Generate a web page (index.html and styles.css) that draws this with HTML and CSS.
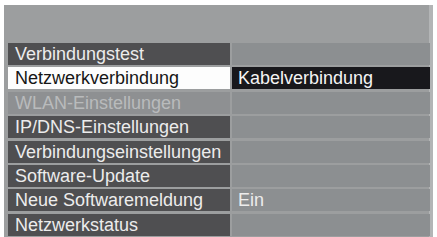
FILE: index.html
```html
<!DOCTYPE html>
<html lang="de">
<head>
    <meta charset="UTF-8">
    <title>Netzwerk-Einstellungen</title>
    <link rel="stylesheet" href="styles.css">
</head>
<body>
    <div class="panel">
        <div class="menu">
            <div class="item">Verbindungstest</div>
            <div class="value"></div>

            <div class="item selected">Netzwerkverbindung</div>
            <div class="value selected">Kabelverbindung</div>

            <div class="item disabled">WLAN-Einstellungen</div>
            <div class="value"></div>

            <div class="item">IP/DNS-Einstellungen</div>
            <div class="value"></div>

            <div class="item">Verbindungseinstellungen</div>
            <div class="value"></div>

            <div class="item">Software-Update</div>
            <div class="value"></div>

            <div class="item">Neue Softwaremeldung</div>
            <div class="value">Ein</div>

            <div class="item">Netzwerkstatus</div>
            <div class="value"></div>
        </div>
    </div>
</body>
</html>
```

FILE: styles.css
```css
body {
    margin: 0;
    padding: 0;
    background: white;
    font-family: "Liberation Sans", Arial, sans-serif;
    overflow: hidden;
}

.panel {
    margin: 5px 4px 0 4px;
    width: 429px;
    height: 232px;
    box-sizing: border-box;
    padding: 38px 3px 0 4px;
    background: #9c9e9f;
    border-right: 4px solid #b3b5b6;
}

.menu {
    display: grid;
    grid-template-columns: 222px 198px;
    grid-auto-rows: 22px;
    column-gap: 2px;
    row-gap: 2.4px;
}

.item,
.value {
    font-size: 18px;
    line-height: 22px;
    white-space: nowrap;
    overflow: hidden;
    color: #ececec;
}

.item {
    padding-left: 7px;
    background: #4f4f51;
}

.value {
    padding-left: 6px;
    background: #8c8f91;
}

.item.selected {
    background: #fdfdfd;
    color: #161616;
}

.value.selected {
    background: #18181c;
    color: #f4f4f4;
}

.item.disabled {
    background: #8e9092;
    color: #b9bbbc;
}
```
